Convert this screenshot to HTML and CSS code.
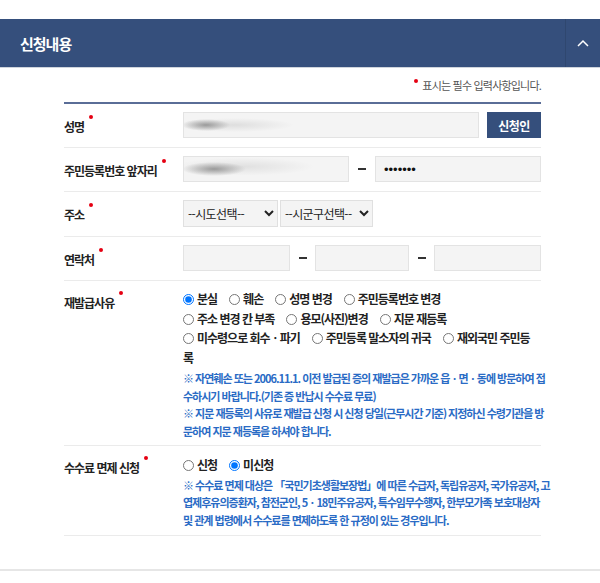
FILE: index.html
```html
<!DOCTYPE html>
<html lang="ko">
<head>
<meta charset="utf-8">
<title>신청내용</title>
<link rel="stylesheet" href="styles.css">
</head>
<body>
<section class="panel">
  <header class="panel-head">
    <h2 class="panel-title">신청내용</h2>
    <button class="toggle" type="button" aria-label="접기">
      <svg width="12" height="8" viewBox="0 0 12 8"><path d="M1 7 L6 2 L11 7" fill="none" stroke="#fff" stroke-width="1.5"/></svg>
    </button>
  </header>
  <div class="panel-body">
    <p class="req-note"><span class="dot"></span>표시는 필수 입력사항입니다.</p>
    <div class="form">
      <div class="row">
        <div class="label">성명<span class="dot"></span></div>
        <div class="field">
          <input class="input grow masked-name" type="text" aria-label="성명">
          <button class="btn" type="button">신청인</button>
        </div>
      </div>
      <div class="row">
        <div class="label">주민등록번호 앞자리<span class="dot"></span></div>
        <div class="field">
          <input class="input grow masked-ssn" type="text" aria-label="주민등록번호 앞자리">
          <span class="dash dash-wide"></span>
          <input class="input grow pw" type="text" value="•••••••" aria-label="주민등록번호 뒷자리">
        </div>
      </div>
      <div class="row">
        <div class="label">주소<span class="dot"></span></div>
        <div class="field tight">
          <select class="select sel-sido"><option>--시도선택--</option></select>
          <select class="select sel-sigungu"><option>--시군구선택--</option></select>
        </div>
      </div>
      <div class="row">
        <div class="label">연락처<span class="dot"></span></div>
        <div class="field">
          <input class="input tel-a" type="text" aria-label="연락처1">
          <span class="dash"></span>
          <input class="input tel-b" type="text" aria-label="연락처2">
          <span class="dash"></span>
          <input class="input tel-a" type="text" aria-label="연락처3">
        </div>
      </div>
      <div class="row row-top">
        <div class="label label-top">재발급사유<span class="dot"></span></div>
        <div class="field-block">
          <div class="radios">
            <label class="radio"><input type="radio" name="reason" checked>분실</label><label class="radio"><input type="radio" name="reason">훼손</label><label class="radio"><input type="radio" name="reason">성명 변경</label><label class="radio"><input type="radio" name="reason">주민등록번호 변경</label><br>
            <label class="radio"><input type="radio" name="reason">주소 변경 칸 부족</label><label class="radio"><input type="radio" name="reason">용모(사진)변경</label><label class="radio"><input type="radio" name="reason">지문 재등록</label><br>
            <label class="radio"><input type="radio" name="reason">미수령으로 회수ㆍ파기</label><label class="radio"><input type="radio" name="reason">주민등록 말소자의 귀국</label><label class="radio"><input type="radio" name="reason">재외국민 주민등<br>록</label>
          </div>
          <p class="note note-reason">※ 자연훼손 또는 2006.11.1. 이전 발급된 증의 재발급은 가까운 읍ㆍ면ㆍ동에 방문하여 접<br>수하시기 바랍니다.(기존 증 반납시 수수료 무료)<br>※ 지문 재등록의 사유로 재발급 신청 시 신청 당일(근무시간 기준) 지정하신 수령기관을 방<br>문하여 지문 재등록을 하셔야 합니다.</p>
        </div>
      </div>
      <div class="row row-fee">
        <div class="label label-fee">수수료 면제 신청<span class="dot"></span></div>
        <div class="field-block">
          <div class="radios">
            <label class="radio"><input type="radio" name="fee">신청</label><label class="radio"><input type="radio" name="fee" checked>미신청</label>
          </div>
          <p class="note note-fee">※ 수수료 면제 대상은 「국민기초생활보장법」에 따른 수급자, 독립유공자, 국가유공자, 고<br>엽제후유의증환자, 참전군인, 5ㆍ18민주유공자, 특수임무수행자, 한부모가족 보호대상자<br>및 관계 법령에서 수수료를 면제하도록 한 규정이 있는 경우입니다.</p>
        </div>
      </div>
    </div>
  </div>
</section>
</body>
</html>
```

FILE: styles.css
```css
* { box-sizing: border-box; }
html, body { margin: 0; padding: 0; background: #fff; }
body {
  font-family: "Noto Sans CJK KR", "Noto Sans", sans-serif;
  color: #222;
  padding-top: 19px;
}
.panel { border-bottom: 2px solid #e6e6e6; }
.panel-head {
  display: flex;
  height: 49px;
  background: #354f7c;
  border-bottom: 1px solid #cfd4dc;
}
.panel-title {
  flex: 1;
  margin: 0;
  padding-left: 20px;
  display: flex;
  align-items: center;
  font-size: 15px;
  font-weight: 700;
  color: #fff;
  letter-spacing: -1px;
}
.toggle {
  width: 35px;
  padding: 0;
  border: 0;
  border-left: 1px solid #2f476f;
  background: #354f7c;
  display: flex;
  align-items: center;
  justify-content: center;
}
.panel-body { padding: 9px 59px 33px 64px; }
.req-note {
  margin: 0 0 9px;
  text-align: right;
  font-size: 11px;
  line-height: 16px;
  color: #555;
  letter-spacing: -0.8px;
}
.req-note .dot { margin-right: 4px; vertical-align: 7px; }
.dot {
  display: inline-block;
  width: 4px;
  height: 4px;
  border-radius: 50%;
  background: #e50012;
  vertical-align: 13px;
  margin-left: 5px;
}
.form { border-top: 2px solid #5a6d97; }
.row {
  display: grid;
  grid-template-columns: 119px minmax(0, 1fr);
  border-bottom: 1px solid #ebebeb;
  padding: 8px 0 9px;
}
.label {
  align-self: center;
  font-size: 12px;
  font-weight: 700;
  letter-spacing: -1px;
  line-height: 18px;
  white-space: nowrap;
}
.label-top { align-self: start; padding-top: 2px; }
.label-fee { align-self: start; padding-top: 1px; }
.row-fee { padding: 9px 0 6px; }
.row-top { padding: 8px 0 5px; }
.field { display: flex; align-items: center; min-width: 0; }
.field.tight { gap: 2px; }
.input {
  height: 26px;
  padding: 0 8px;
  border: 1px solid #e3e3e3;
  background: #f4f4f4;
  font-family: inherit;
  font-size: 12px;
  color: #222;
  min-width: 0;
  outline: none;
}
.grow { flex: 1 1 0; width: 0; }
.masked-name {
  background:
    radial-gradient(ellipse 24px 6px at 22px 50%, rgba(140,140,140,.85), rgba(140,140,140,0)),
    radial-gradient(ellipse 60px 7px at 50px 50%, rgba(200,200,200,.5), rgba(200,200,200,0)),
    #f4f4f4;
}
.masked-ssn {
  background:
    radial-gradient(ellipse 32px 7px at 30px 50%, rgba(140,140,140,.85), rgba(140,140,140,0)),
    radial-gradient(ellipse 70px 9px at 60px 40%, rgba(205,205,205,.5), rgba(205,205,205,0)),
    #f4f4f4;
}
.pw {
  font-family: "Liberation Sans", Arial, sans-serif;
  font-size: 13px;
  letter-spacing: 0;
  color: #111;
}
.btn {
  margin-left: 8px;
  width: 54px;
  height: 26px;
  border: 0;
  background: #354f7c;
  color: #fff;
  font-family: inherit;
  font-size: 12px;
  font-weight: 700;
  letter-spacing: -0.5px;
  padding: 0;
}
.dash {
  width: 25px;
  display: flex;
  justify-content: center;
}
.dash::before {
  content: "";
  width: 8px;
  height: 2px;
  background: #333;
}
.dash-wide { width: 26px; }
.tel-a { width: 107px; }
.tel-b { width: 94px; }
.select {
  height: 27px;
  border: 1px solid #e0e0e0;
  background-color: #f4f4f4;
  font-family: inherit;
  font-size: 12px;
  letter-spacing: -0.6px;
  color: #222;
  padding: 0;
  border-radius: 0;
}
.sel-sido { width: 95px; }
.sel-sigungu { width: 93px; }
.field-block { min-width: 0; }
.radios {
  font-size: 12px;
  font-weight: 700;
  letter-spacing: -1px;
  line-height: 19.5px;
  white-space: nowrap;
  color: #222;
}
.radio { margin-right: 12px; }
.radio input {
  width: 11px;
  height: 11px;
  margin: 0 3px 0 0;
  vertical-align: -1px;
}
.note {
  margin: 3px 0 0;
  font-size: 11px;
  font-weight: 700;
  line-height: 17.5px;
  letter-spacing: -1px;
  color: #2a6bc5;
  white-space: nowrap;
}
.note-fee { margin-top: 2px; }
```
